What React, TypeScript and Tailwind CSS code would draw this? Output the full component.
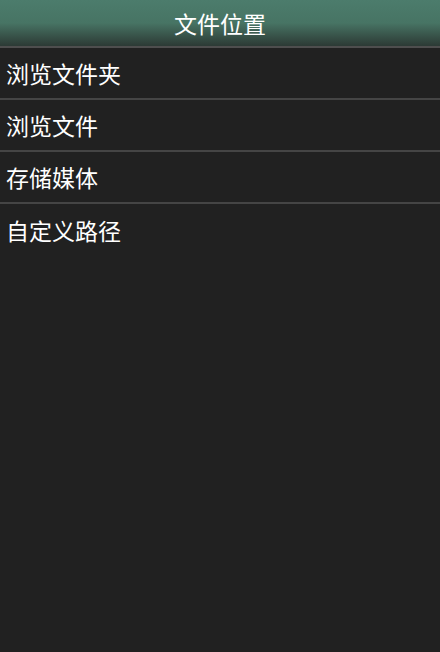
const items = ['浏览文件夹', '浏览文件', '存储媒体', '自定义路径'];

export default function App() {
  return (
    <div
      className="w-[440px] h-[652px] bg-[#212121] flex flex-col overflow-hidden"
      style={{ fontFamily: '"Noto Sans CJK SC", "Noto Sans", sans-serif' }}
    >
      {/* Title bar */}
      <div className="h-[48px] shrink-0 flex items-center justify-center pt-px bg-gradient-to-b from-[#4c7c6c] via-[#477464] to-[#2c3a35] border-b-2 border-[#4e4e4e]">
        <span className="text-[23px] leading-none text-white">文件位置</span>
      </div>

      {/* Location list */}
      <div className="flex flex-col">
        {items.map((label, i) => (
          <div
            key={label}
            className={`h-[52px] flex items-center px-[6px] ${
              i < items.length - 1 ? 'border-b-2 border-[#454545]' : ''
            }`}
          >
            <span className="text-[23px] leading-none text-white">{label}</span>
          </div>
        ))}
      </div>
    </div>
  );
}
